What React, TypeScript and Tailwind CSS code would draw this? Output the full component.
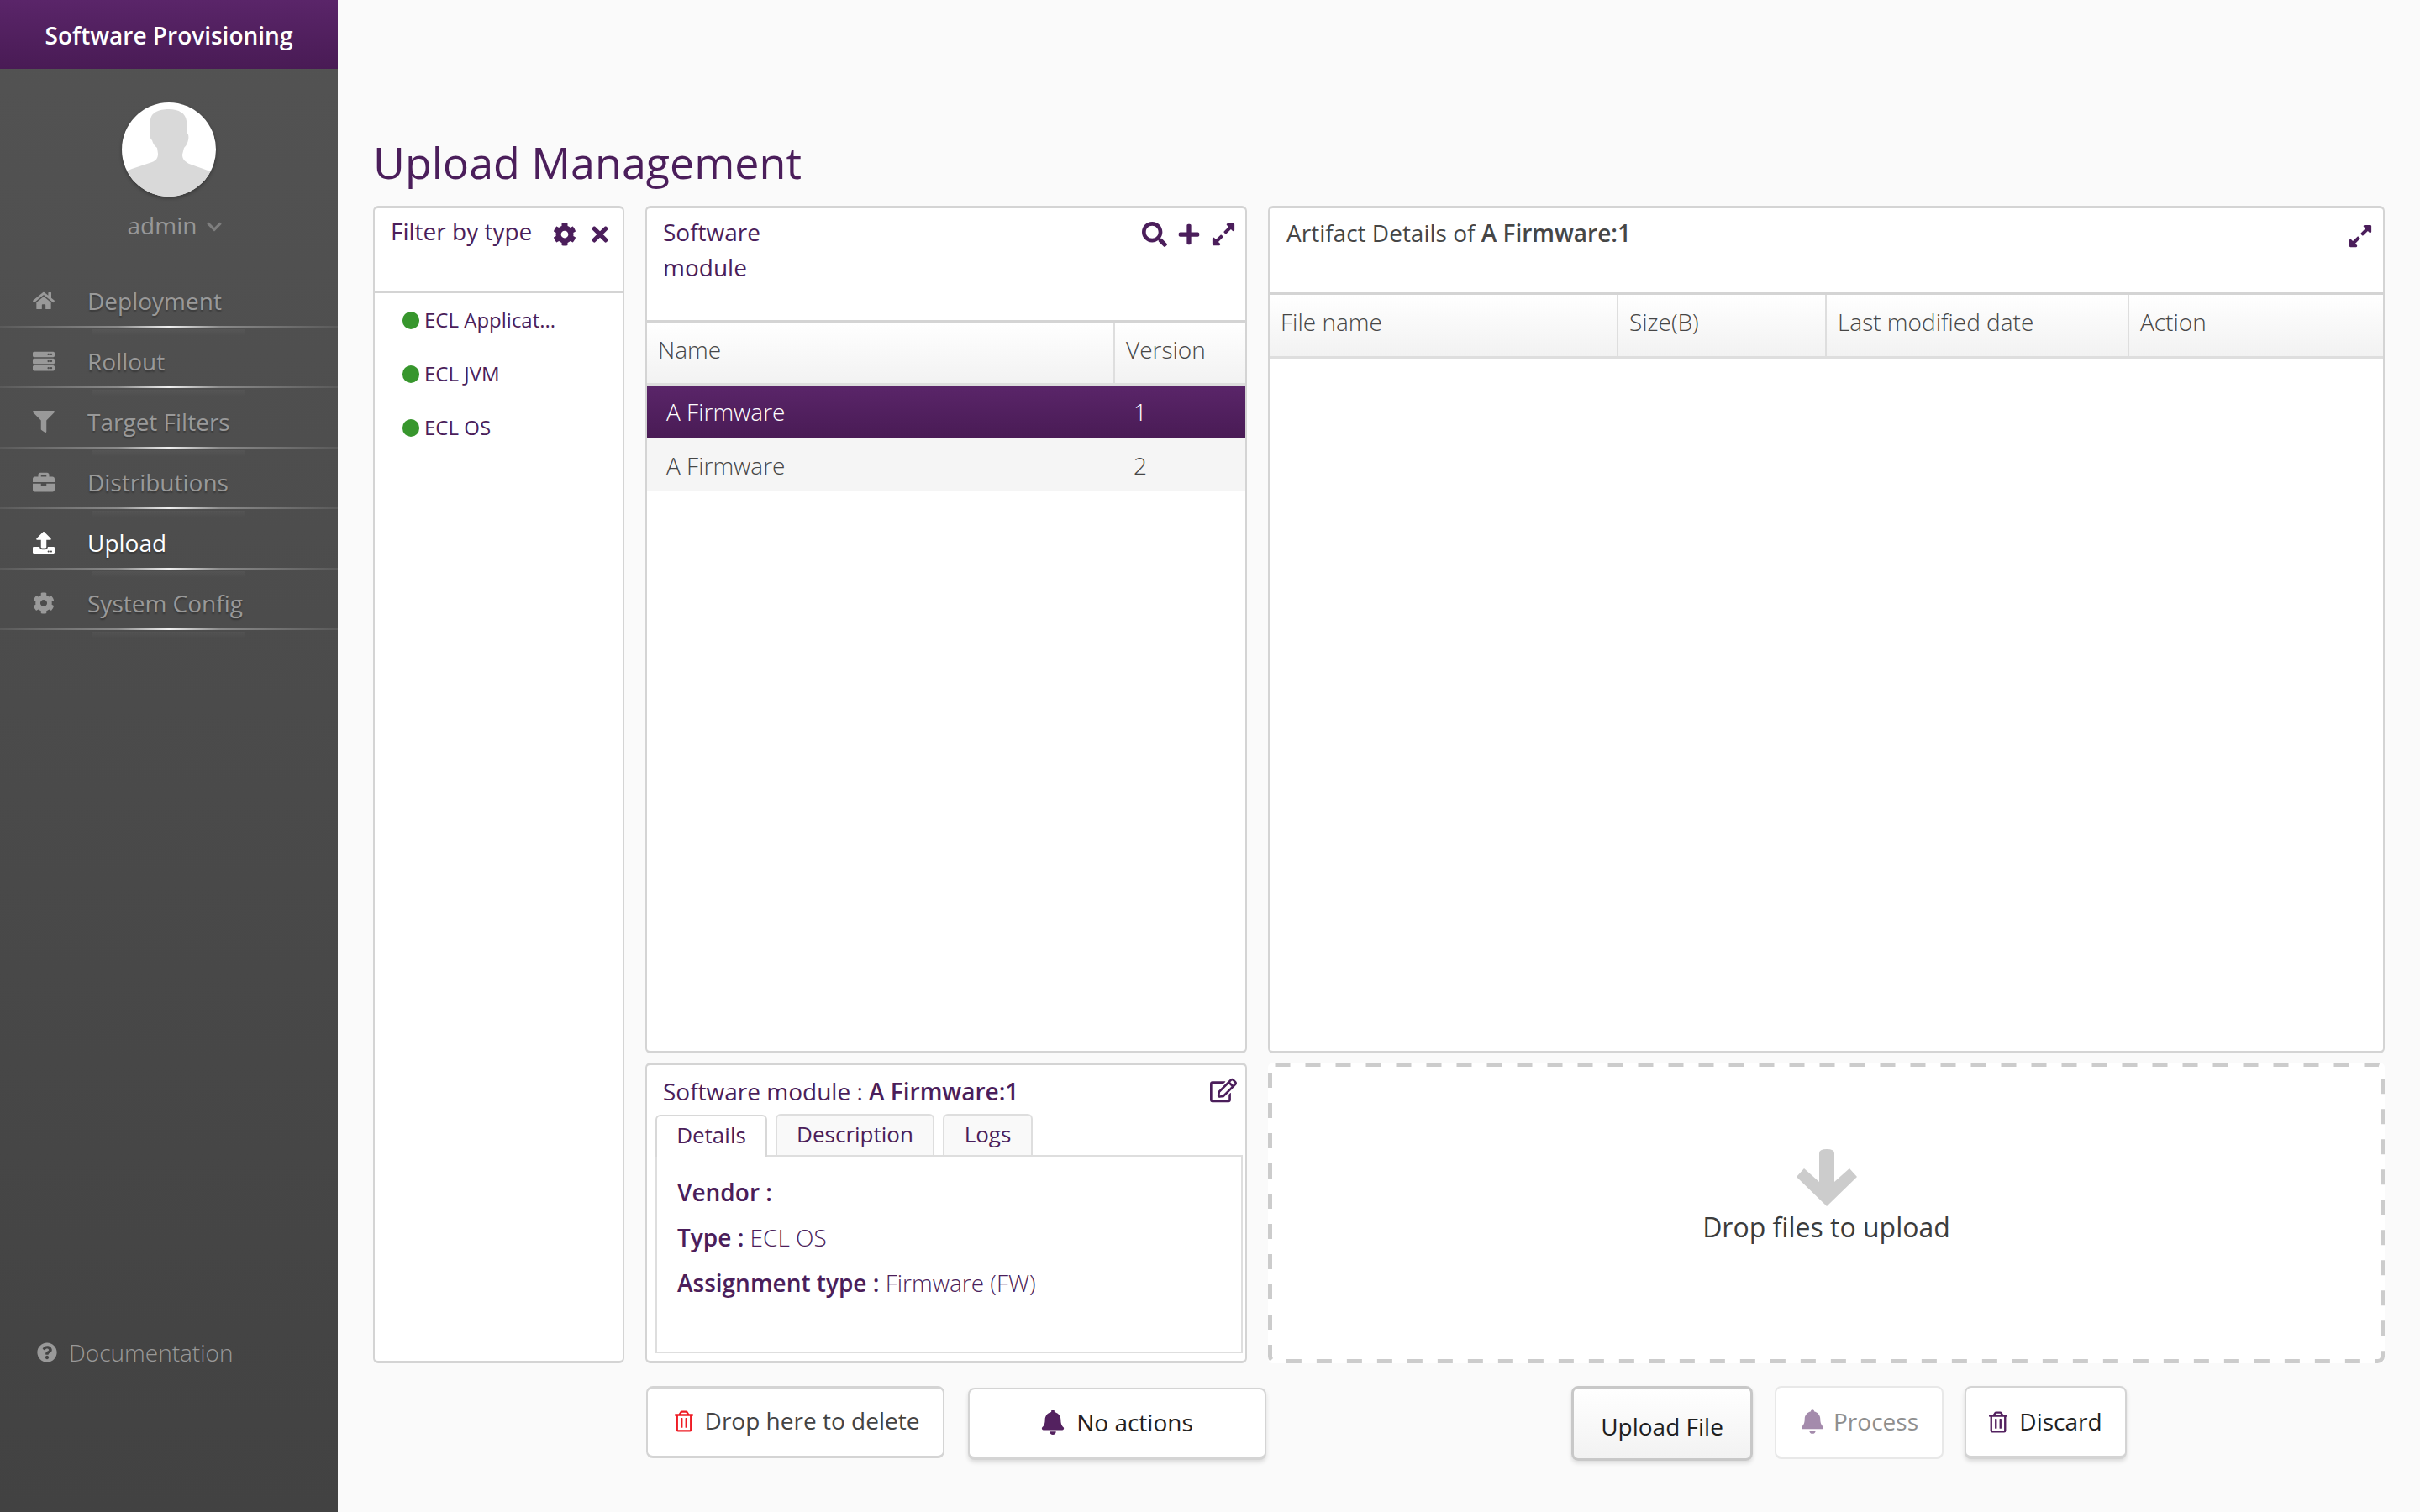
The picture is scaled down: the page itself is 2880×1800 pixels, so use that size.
import {
  FaBell,
  FaBriefcase,
  FaChevronDown,
  FaCog,
  FaExpandAlt,
  FaFilter,
  FaHome,
  FaPlus,
  FaQuestionCircle,
  FaRegEdit,
  FaRegTrashAlt,
  FaSearch,
  FaServer,
  FaTimes,
  FaUpload,
} from 'react-icons/fa';

const navItems = [
  { label: 'Deployment', icon: FaHome },
  { label: 'Rollout', icon: FaServer },
  { label: 'Target Filters', icon: FaFilter },
  { label: 'Distributions', icon: FaBriefcase },
  { label: 'Upload', icon: FaUpload, active: true },
  { label: 'System Config', icon: FaCog },
];

const Sidebar = () => (
  <aside className="w-[402px] shrink-0 min-h-[1800px] flex flex-col bg-gradient-to-b from-[#535353] to-[#424242]">
    <div className="h-[82px] pt-[2px] flex items-center justify-center bg-gradient-to-b from-[#5a2569] to-[#491b55] text-white text-[28px] font-semibold">
      Software Provisioning
    </div>
    <div className="flex flex-col items-center pt-[40px]">
      <div className="w-[112px] h-[112px] rounded-full bg-white overflow-hidden shadow-[0_2px_4px_rgba(0,0,0,0.3)]">
        <svg viewBox="0 0 112 112" className="w-full h-full" fill="#d9d9d9">
          <path d="M34 22c0-10 10-14 22-14s20 5 21 14l0 14c3 1 3 7 1 12-1 3-3 5-4 6l-2 8c0 6 3 8 8 11l28 10v30H0V84l12-5 24-8c5-2 7-5 7-10l-1-7c-3-2-5-5-6-9-3-2-3-8-2-11z" />
        </svg>
      </div>
      <div className="mt-[15px] pl-[16px] flex items-center gap-[10px] h-[38px] text-[#979797] text-[28px]">
        admin
        <FaChevronDown className="w-[22px] h-[20px] text-[#7e7e7e] mt-[4px]" />
      </div>
    </div>
    <nav className="mt-[31px] flex flex-col">
      {navItems.map(({ label, icon: Icon, active }) => (
        <div key={label} className="relative h-[72px] pt-[7px] flex items-center pl-[38px]">
          <span className="w-[28px] flex justify-center">
            <Icon className={`w-[26px] h-[26px] ${active ? 'text-white' : 'text-[#999999]'}`} />
          </span>
          <span
            className={`ml-[38px] text-[28px] [text-shadow:0_2px_2px_rgba(0,0,0,0.3)] ${active ? 'text-white' : 'text-[#999999]'}`}
          >
            {label}
          </span>
          <div className="absolute left-0 right-0 bottom-0 h-[2px] bg-[linear-gradient(90deg,#5a5a5a_0%,#8a8a8a_35%,#f0f0f0_50%,#8a8a8a_65%,#5a5a5a_100%)]" />
          <div className="absolute left-[110px] right-[110px] bottom-[-10px] h-[8px] bg-gradient-to-b from-[rgba(255,255,255,0.04)] to-transparent" />
        </div>
      ))}
    </nav>
    <div className="mt-[839px] pl-[44px] flex items-center gap-[14px] text-[#999999] text-[28px]">
      <FaQuestionCircle className="w-[24px] h-[24px]" />
      <span className="font-light">Documentation</span>
    </div>
  </aside>
);

const Panel = ({ className, children }: { className?: string; children: React.ReactNode }) => (
  <section className={`bg-white border-2 border-t-[3px] border-b-[3px] border-[#d4d4d4] rounded-[6px] ${className ?? ''}`}>
    {children}
  </section>
);

const HeadCell = ({ children }: { children: React.ReactNode }) => (
  <div className="flex items-center pl-[13px] pb-[9px] border-r-2 border-[#dedede] last:border-r-0 text-[#464646] text-[28px] font-light">
    {children}
  </div>
);

const FilterPanel = () => (
  <Panel className="row-span-2">
    <div className="h-[101px] flex items-start justify-between pl-[19px] pr-[13px] pt-[7px] border-b-[3px] border-[#d4d4d4] text-[#4b1e5b]">
      <span className="text-[28px] leading-[40px]">Filter by type</span>
      <span className="flex items-center gap-[14px] h-[48px]">
        <FaCog className="w-[28px] h-[28px]" />
        <FaTimes className="w-[28px] h-[28px]" />
      </span>
    </div>
    <ul className="pl-[33px]">
      {['ECL Applicat...', 'ECL JVM', 'ECL OS'].map((t) => (
        <li key={t} className="h-[64px] flex items-center gap-[6px] text-[#4b1e5b] text-[24px]">
          <span className="w-[20px] h-[21px] rounded-full bg-[#37962d]" />
          {t}
        </li>
      ))}
    </ul>
  </Panel>
);

const ModulePanel = () => (
  <Panel className="h-[1009px]">
    <div className="h-[136px] flex items-start justify-between pl-[19px] pr-[11px] pt-[7px] border-b-[3px] border-[#d4d4d4] text-[#4b1e5b]">
      <span className="text-[28px] leading-[42px] w-[150px]">Software module</span>
      <span className="flex items-center gap-[12px] h-[48px]">
        <FaSearch className="w-[30px] h-[30px]" />
        <FaPlus className="w-[28px] h-[28px]" />
        <FaExpandAlt className="w-[30px] h-[30px]" />
      </span>
    </div>
    <div className="h-[75px] grid grid-cols-[557px_1fr] bg-gradient-to-b from-white to-[#f2f2f2] border-b-[3px] border-[#dedede]">
      <HeadCell>Name</HeadCell>
      <HeadCell>Version</HeadCell>
    </div>
    <div className="h-[63px] pb-[1px] grid grid-cols-[557px_1fr] items-center bg-gradient-to-b from-[#5a2569] to-[#491b55] text-white text-[28px] font-light">
      <span className="pl-[23px]">A Firmware</span>
      <span className="pl-[22px]">1</span>
    </div>
    <div className="h-[63px] pt-[1px] grid grid-cols-[557px_1fr] items-center bg-[#f5f5f5] text-[#464646] text-[28px] font-light">
      <span className="pl-[23px]">A Firmware</span>
      <span className="pl-[22px]">2</span>
    </div>
  </Panel>
);

const ArtifactPanel = () => (
  <Panel className="h-[1009px]">
    <div className="h-[103px] flex items-start justify-between pl-[20px] pr-[12px] pt-[8px] border-b-[3px] border-[#d4d4d4] text-[#464646]">
      <span className="text-[28px] leading-[42px]">
        Artifact Details of <span className="font-semibold">A Firmware:1</span>
      </span>
      <FaExpandAlt className="w-[30px] h-[30px] text-[#4b1e5b] mt-[10px]" />
    </div>
    <div className="h-[76px] grid grid-cols-[415px_248px_360px_1fr] bg-gradient-to-b from-white to-[#f2f2f2] border-b-[3px] border-[#dedede]">
      <HeadCell>File name</HeadCell>
      <HeadCell>Size(B)</HeadCell>
      <HeadCell>Last modified date</HeadCell>
      <HeadCell>Action</HeadCell>
    </div>
  </Panel>
);

const DetailsPanel = () => (
  <Panel className="h-[358px] pl-[10px] pr-[3px] flex flex-col">
    <div className="h-[58px] flex items-start justify-between pl-[9px] pr-[7px] pt-[11px] text-[#4b1e5b] text-[28px]">
      <span className="leading-[40px]">
        Software module : <span className="font-semibold">A Firmware:1</span>
      </span>
      <FaRegEdit className="w-[32px] h-[32px] mt-[3px]" />
    </div>
    <div className="h-[49px] flex gap-[10px] items-end text-[#4b1e5b] text-[26px]">
      <div className="h-[50px] w-[133px] pb-[3px] flex items-center justify-center bg-white border-2 border-b-0 border-[#d8d8d8] rounded-t-[6px] relative z-10 -mb-[2px]">
        Details
      </div>
      <div className="h-[49px] w-[189px] pb-[2px] flex items-center justify-center bg-[#f9f9f9] border-2 border-b-0 border-[#dedede] rounded-t-[6px]">
        Description
      </div>
      <div className="h-[49px] w-[107px] pb-[2px] flex items-center justify-center bg-[#f9f9f9] border-2 border-b-0 border-[#dedede] rounded-t-[6px]">
        Logs
      </div>
    </div>
    <div className="h-[236px] border-2 border-[#dedede] px-[24px] pt-[15px] text-[#4b1e5b] text-[28px] leading-[54px]">
      <p className="font-semibold">Vendor :</p>
      <p>
        <span className="font-semibold">Type :</span> <span className="font-light">ECL OS</span>
      </p>
      <p>
        <span className="font-semibold">Assignment type :</span> <span className="font-light">Firmware (FW)</span>
      </p>
    </div>
  </Panel>
);

const DropZone = () => (
  <section className="relative h-[358px] bg-white rounded-[6px] flex flex-col items-center pt-[103px]">
    {/* browser dashes come out too short, so the dashed edge is drawn */}
    <svg className="absolute inset-0 w-full h-full" fill="none">
      <rect
        x="2.5"
        y="2.5"
        width="1324"
        height="353"
        rx="6"
        stroke="#cccccc"
        strokeWidth="5"
        strokeDasharray="18 18"
      />
    </svg>
    <svg viewBox="0 0 72 68" className="w-[72px] h-[68px]" fill="#cccccc">
      <path d="M27 39V5Q27 0 36 0T45 5V39L63 23 72 33 36 68 0 33 9 23Z" />
    </svg>
    <span className="mt-[3px] text-[#3c3c3c] text-[32px] leading-[44px]">Drop files to upload</span>
  </section>
);

const ActionRow = () => (
  <div className="mt-[27px] flex items-start pl-[325px]">
    <div className="w-[355px] h-[86px] bg-white border-2 border-t-[3px] border-b-[3px] border-[#d4d4d4] rounded-[8px] flex items-start justify-center gap-[14px] pt-[17px] pl-[4px] text-[#444444] text-[28px]">
      <FaRegTrashAlt className="w-[22px] h-[26px] text-[#ee1c25] mt-[9px]" />
      <span>Drop here to delete</span>
    </div>
    <div className="ml-[28px] mt-[2px] w-[355px] h-[86px] pb-[2px] bg-white border-2 border-b-[4px] border-[#d4d4d4] rounded-[8px] shadow-[0_3px_5px_rgba(0,0,0,0.12)] flex items-center justify-center gap-[14px] text-[#222222] text-[28px]">
      <FaBell className="w-[28px] h-[30px] text-[#53215f]" />
      No actions
    </div>
    <div className="ml-[363px] w-[216px] h-[89px] bg-gradient-to-b from-white to-[#f2f2f2] border-[3px] border-[#c8c8c8] rounded-[8px] shadow-[0_3px_5px_rgba(0,0,0,0.12)] flex items-center justify-center pt-[6px] text-[#1f1f1f] text-[28px]">
      Upload File
    </div>
    <div className="ml-[26px] w-[201px] h-[87px] bg-white border-2 border-b-[3px] border-[#e8e8e8] rounded-[8px] flex items-start justify-center gap-[12px] pt-[19px] pl-[2px] text-[#8f8f8f] text-[28px]">
      <FaBell className="w-[26px] h-[30px] text-[#a48bac] mt-[6px]" />
      Process
    </div>
    <div className="ml-[25px] w-[193px] h-[87px] bg-white border-2 border-b-[4px] border-[#d4d4d4] rounded-[8px] shadow-[0_3px_5px_rgba(0,0,0,0.12)] flex items-start justify-center gap-[14px] pt-[19px] text-[#1f1f1f] text-[28px]">
      <FaRegTrashAlt className="w-[22px] h-[26px] text-[#53215f] mt-[9px]" />
      Discard
    </div>
  </div>
);

export default function App() {
  return (
    <div className="flex min-h-[1800px] bg-[#fafafa] font-['Open_Sans',sans-serif]">
      <Sidebar />
      <main className="flex-1 pl-[42px] pr-[42px]">
        <div className="h-[245px] flex items-end pb-[14px]">
          <h1 className="text-[#4b1e5b] text-[52px] leading-[76px]">Upload Management</h1>
        </div>
        <div className="grid grid-cols-[299px_716px_1329px] gap-x-[25px] gap-y-[11px]">
          <FilterPanel />
          <ModulePanel />
          <ArtifactPanel />
          <DetailsPanel />
          <DropZone />
        </div>
        <ActionRow />
      </main>
    </div>
  );
}
